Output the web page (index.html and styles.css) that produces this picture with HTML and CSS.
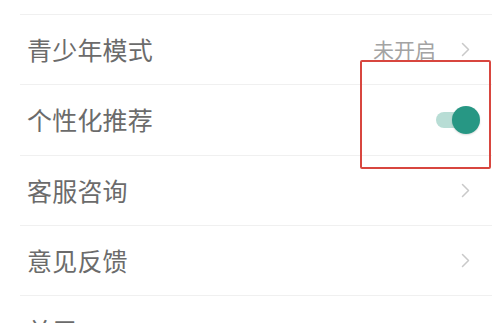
FILE: index.html
```html
<!DOCTYPE html>
<html lang="zh-CN">
<head>
<meta charset="utf-8">
<link rel="stylesheet" href="styles.css">
</head>
<body>
<div class="page">
  <div class="list">
    <div class="spacer"></div>
    <div class="row">
      <span class="label">青少年模式</span>
      <span class="right">
        <span class="status">未开启</span>
        <svg class="chev" viewBox="0 0 9 15" width="9" height="15"><path d="M1.5 1.5 L7.5 7.5 L1.5 13.5" fill="none" stroke="#c9c9c9" stroke-width="1.5" stroke-linecap="round" stroke-linejoin="round"/></svg>
      </span>
    </div>
    <div class="row">
      <span class="label">个性化推荐</span>
      <span class="toggle"><span class="track"></span><span class="thumb"></span></span>
    </div>
    <div class="row">
      <span class="label">客服咨询</span>
      <svg class="chev" viewBox="0 0 9 15" width="9" height="15"><path d="M1.5 1.5 L7.5 7.5 L1.5 13.5" fill="none" stroke="#c9c9c9" stroke-width="1.5" stroke-linecap="round" stroke-linejoin="round"/></svg>
    </div>
    <div class="row">
      <span class="label">意见反馈</span>
      <svg class="chev" viewBox="0 0 9 15" width="9" height="15"><path d="M1.5 1.5 L7.5 7.5 L1.5 13.5" fill="none" stroke="#c9c9c9" stroke-width="1.5" stroke-linecap="round" stroke-linejoin="round"/></svg>
    </div>
    <div class="row">
      <span class="label">关于</span>
    </div>
  </div>
  <div class="highlight"></div>
</div>
</body>
</html>
```
FILE: styles.css
```css
html, body {
  margin: 0;
  padding: 0;
  background: #ffffff;
  overflow: hidden;
}
.page {
  position: relative;
  width: 502px;
  height: 323px;
  overflow: hidden;
  font-family: "Noto Sans CJK SC", "Noto Sans", sans-serif;
}
.list {
  margin: 0 10px 0 20px;
}
.spacer {
  height: 15px;
  box-sizing: border-box;
  border-bottom: 1px solid #f0f0f0;
}
.row {
  height: 70.3px;
  box-sizing: border-box;
  border-bottom: 1px solid #f0f0f0;
  display: flex;
  align-items: center;
  justify-content: space-between;
  padding: 0 22px 0 7px;
}
.label {
  font-size: 25px;
  color: #6b6b6b;
  letter-spacing: 0.2px;
  line-height: 1;
}
.right {
  display: flex;
  align-items: center;
  gap: 25px;
}
.status {
  font-size: 21px;
  color: #a3a3a3;
  line-height: 1;
}
.chev {
  display: block;
}
.toggle {
  position: relative;
  width: 44px;
  height: 28px;
  margin-right: -10px;
}
.track {
  position: absolute;
  left: 0;
  top: 6px;
  width: 36px;
  height: 16px;
  border-radius: 8px;
  background: #b8ddd5;
}
.thumb {
  position: absolute;
  right: 0;
  top: 0;
  width: 28px;
  height: 28px;
  border-radius: 50%;
  background: #279784;
  box-shadow: 0 1px 2px rgba(0,0,0,0.15);
}
.highlight {
  position: absolute;
  left: 360px;
  top: 60px;
  width: 131px;
  height: 109px;
  box-sizing: border-box;
  border: 2px solid #d8463f;
  border-radius: 2px;
}
```
